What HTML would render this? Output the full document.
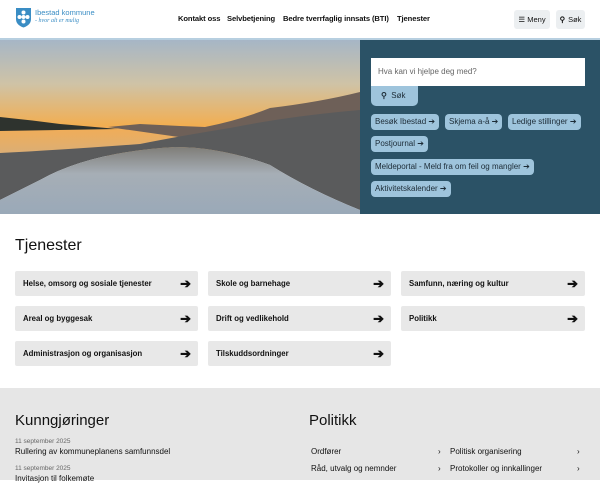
<!DOCTYPE html>
<html><head><meta charset="utf-8"><style>
*{box-sizing:border-box;margin:0;padding:0}
body{width:600px;height:480px;overflow:hidden;font-family:"Liberation Sans",sans-serif;color:#111;background:#fff;position:relative}
.abs{position:absolute}
.nav{font-size:7.6px;font-weight:bold;top:14px;white-space:nowrap;letter-spacing:-0.1px}
.btn{background:#eceff1;border-radius:3px;font-size:7.5px;height:19px;top:10px;display:flex;align-items:center;justify-content:center;gap:3px}
.chip{position:absolute;background:#9ec4dc;border-radius:4px;font-size:8px;height:16px;line-height:16px;padding:0 4px;color:#1c2b36;white-space:nowrap}
.card{position:absolute;width:183px;height:25px;background:#e8e8e8;border-radius:2px;font-size:7.8px;font-weight:bold;line-height:25px;padding-left:8px}
.card b{position:absolute;right:7px;top:0;font-size:13px}
.pl{position:absolute;font-size:8px}
</style></head><body>
<svg class="abs" style="left:15px;top:7px" width="17" height="21" viewBox="0 0 17 21"><path d="M1 1H16V12Q16 18 8.5 20.5Q1 18 1 12Z" fill="#3a8dc4"/><g fill="#fff"><circle cx="8.5" cy="10" r="2"/><circle cx="8.5" cy="5.5" r="2"/><circle cx="8.5" cy="14.5" r="2"/><circle cx="4.5" cy="10" r="2"/><circle cx="12.5" cy="10" r="2"/></g></svg>
<div class="abs" style="left:35px;top:8px;font-size:7.5px;color:#3a8dc4">Ibestad kommune</div>
<div class="abs" style="left:35px;top:18px;font-size:6px;color:#3a8dc4;font-style:italic;font-family:'Liberation Serif',serif">- hvor alt er mulig</div>
<div class="abs nav" style="left:178px">Kontakt oss</div>
<div class="abs nav" style="left:227px">Selvbetjening</div>
<div class="abs nav" style="left:283px">Bedre tverrfaglig innsats (BTI)</div>
<div class="abs nav" style="left:397px">Tjenester</div>
<div class="abs btn" style="left:514px;width:36px">☰ Meny</div>
<div class="abs btn" style="left:556px;width:29px"><span style="font-weight:bold">⚲</span>Søk</div>
<div class="abs" style="left:0;top:38px;width:600px;height:2px;background:#b7cfe0"></div>
<svg class="abs" style="left:0;top:40px" width="360" height="174" viewBox="0 0 360 174">
<defs><linearGradient id="sky" x1="0" y1="0" x2="0" y2="1"><stop offset="0" stop-color="#a6b6c6"/><stop offset=".5" stop-color="#cfc3a6"/><stop offset="1" stop-color="#f4ad4c"/></linearGradient>
<linearGradient id="wat" x1="0" y1="0" x2="0" y2="1"><stop offset="0" stop-color="#f3ad55"/><stop offset="1" stop-color="#d9ae78"/></linearGradient>
<linearGradient id="pool" x1="0" y1="0" x2="0" y2="1"><stop offset="0" stop-color="#7f7d78"/><stop offset=".4" stop-color="#a6aeb6"/><stop offset="1" stop-color="#9aa9b8"/></linearGradient></defs>
<rect width="360" height="88" fill="url(#sky)"/>
<rect y="86" width="360" height="30" fill="url(#wat)"/>
<path d="M0 77Q30 80 60 84L118 89L0 91Z" fill="#2e332e"/>
<path d="M108 87L140 84L180 86L205 87Q240 80 270 68Q320 62 360 52V100H200Z" fill="#6e6058"/>
<path d="M0 113Q60 110 140 104Q180 96 230 88Q290 76 360 70V170Q310 150 270 125Q220 107 175 107Q90 112 40 140L0 160Z" fill="#5a5b5c"/>
<path d="M0 160L40 140Q90 112 175 107Q220 107 270 125Q310 150 360 170V174H0Z" fill="url(#pool)"/>
</svg>
<div class="abs" style="left:360px;top:40px;width:240px;height:174px;background:#2b5266"></div>
<div class="abs" style="left:371px;top:58px;width:214px;height:28px;background:#fff;font-size:8px;color:#666;padding:9px 7px">Hva kan vi hjelpe deg med?</div>
<div class="abs" style="left:371px;top:86px;width:47px;height:20px;background:#9ec4dc;border-radius:0 0 5px 5px;font-size:8px;line-height:20px;padding-left:10px;color:#1c2b36"><b>⚲</b>&nbsp; Søk</div>
<div class="chip" style="left:371px;top:114px">Besøk Ibestad ➔</div>
<div class="chip" style="left:445px;top:114px">Skjema a-å ➔</div>
<div class="chip" style="left:508px;top:114px">Ledige stillinger ➔</div>
<div class="chip" style="left:371px;top:136px">Postjournal ➔</div>
<div class="chip" style="left:371px;top:159px">Meldeportal - Meld fra om feil og mangler ➔</div>
<div class="chip" style="left:371px;top:181px">Aktivitetskalender ➔</div>
<div class="abs" style="left:15px;top:237px;font-size:16px">Tjenester</div>
<div class="card" style="left:15px;top:271px">Helse, omsorg og sosiale tjenester<b>➔</b></div>
<div class="card" style="left:208px;top:271px">Skole og barnehage<b>➔</b></div>
<div class="card" style="left:401px;top:271px;width:184px">Samfunn, næring og kultur<b>➔</b></div>
<div class="card" style="left:15px;top:306px">Areal og byggesak<b>➔</b></div>
<div class="card" style="left:208px;top:306px">Drift og vedlikehold<b>➔</b></div>
<div class="card" style="left:401px;top:306px;width:184px">Politikk<b>➔</b></div>
<div class="card" style="left:15px;top:341px">Administrasjon og organisasjon<b>➔</b></div>
<div class="card" style="left:208px;top:341px">Tilskuddsordninger<b>➔</b></div>
<div class="abs" style="left:0;top:388px;width:600px;height:92px;background:#e6e6e6"></div>
<div class="abs" style="left:15px;top:412px;font-size:15px">Kunngjøringer</div>
<div class="abs" style="left:15px;top:438px;font-size:6.5px;color:#666">11 september 2025</div>
<div class="abs" style="left:15px;top:447px;font-size:8px">Rullering av kommuneplanens samfunnsdel</div>
<div class="abs" style="left:15px;top:465px;font-size:6.5px;color:#666">11 september 2025</div>
<div class="abs" style="left:15px;top:474px;font-size:8px">Invitasjon til folkemøte</div>
<div class="abs" style="left:309px;top:412px;font-size:15px">Politikk</div>
<div class="pl" style="left:311px;top:447px">Ordfører</div>
<div class="pl" style="left:438px;top:447px">›</div>
<div class="pl" style="left:450px;top:447px">Politisk organisering</div>
<div class="pl" style="left:577px;top:447px">›</div>
<div class="pl" style="left:311px;top:464px">Råd, utvalg og nemnder</div>
<div class="pl" style="left:438px;top:464px">›</div>
<div class="pl" style="left:450px;top:464px">Protokoller og innkallinger</div>
<div class="pl" style="left:577px;top:464px">›</div>
</body></html>
